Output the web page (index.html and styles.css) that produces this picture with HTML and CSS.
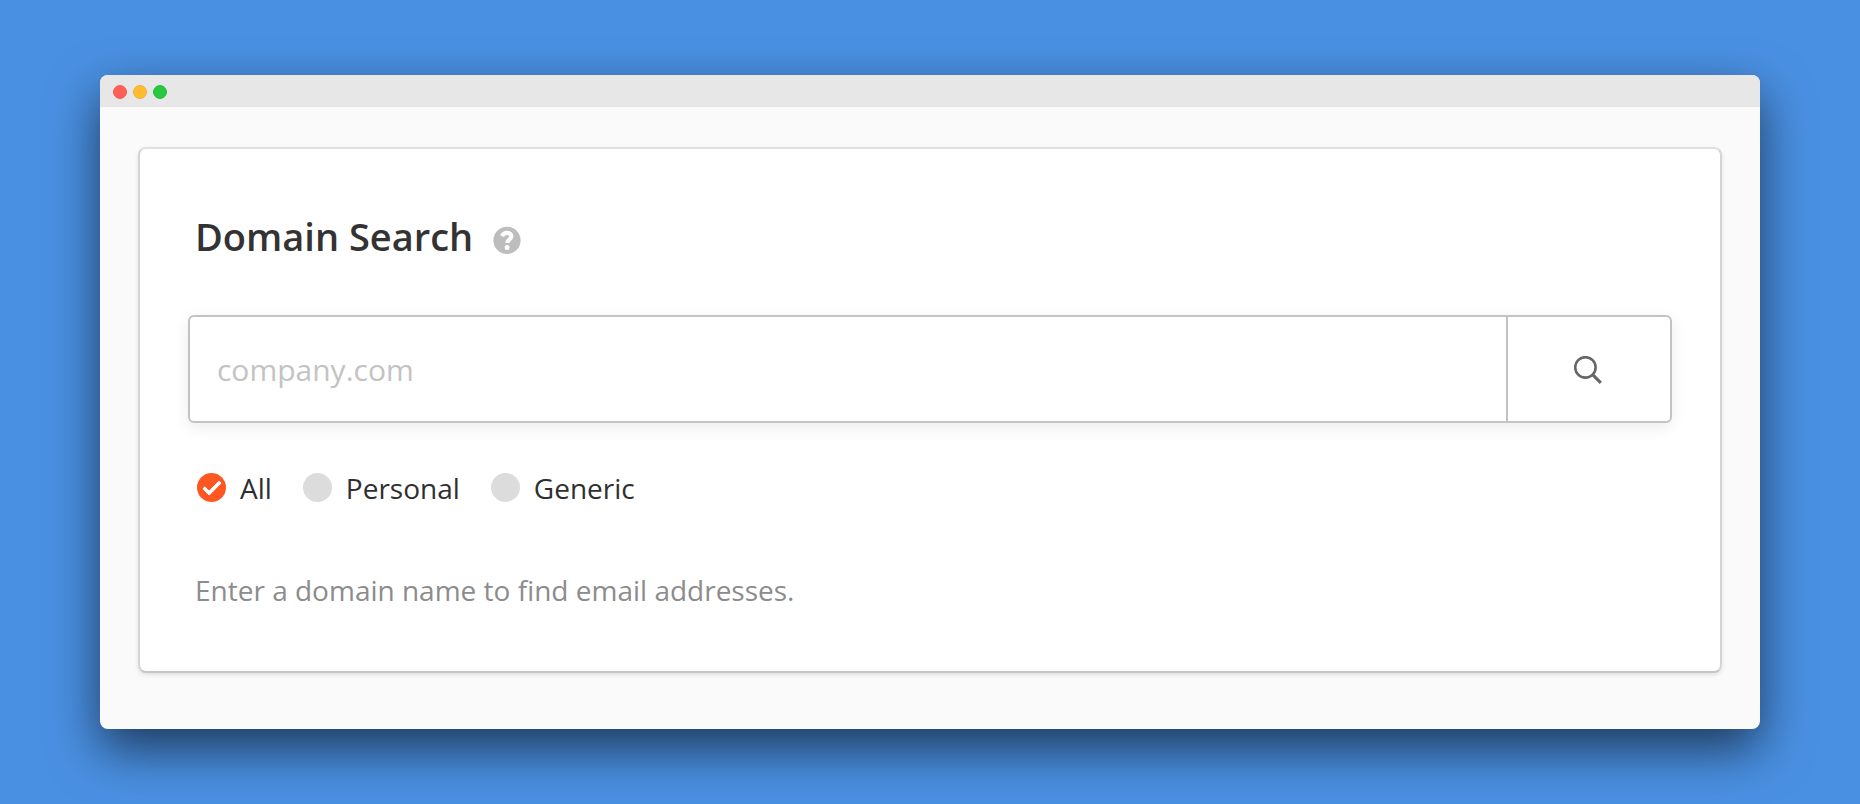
FILE: index.html
```html
<!DOCTYPE html>
<html lang="en">
<head>
  <meta charset="utf-8">
  <title>Domain Search</title>
  <link rel="stylesheet" href="styles.css">
</head>
<body>
  <div class="window">
    <div class="titlebar">
      <span class="dot dot-close"></span>
      <span class="dot dot-minimize"></span>
      <span class="dot dot-zoom"></span>
    </div>
    <main class="content">
      <form class="card">
        <header class="card-header">
          <h1 class="title">Domain Search</h1>
          <button class="help" type="button" aria-label="Help">
            <svg viewBox="0 0 28 28" width="28" height="28" aria-hidden="true">
              <circle cx="14" cy="14.4" r="13.6" fill="#bdbdbd"/>
              <path d="M9 10.2C10 7.9 11.7 6.8 14 6.8c2.6 0 4.3 1.4 4.3 3.5 0 3.3-4.1 3.2-4.1 6.6" fill="none" stroke="#fff" stroke-width="4.2"/>
              <circle cx="14.1" cy="21.4" r="2.5" fill="#fff"/>
            </svg>
          </button>
        </header>
        <div class="search">
          <input class="search-input" type="text" placeholder="company.com" aria-label="Domain name">
          <button class="search-button" type="submit" aria-label="Search">
            <svg viewBox="0 0 28 28" width="28" height="28" fill="none" stroke="#666" aria-hidden="true">
              <circle cx="11.4" cy="11.4" r="10.2" stroke-width="2.6"/>
              <path d="M18.6 18.6l8.2 8.2" stroke-width="3.2"/>
            </svg>
          </button>
        </div>
        <div class="filters">
          <label class="filter"><input class="radio" type="radio" name="type" checked>All</label>
          <label class="filter"><input class="radio" type="radio" name="type">Personal</label>
          <label class="filter"><input class="radio" type="radio" name="type">Generic</label>
        </div>
        <p class="hint">Enter a domain name to find email addresses.</p>
      </form>
    </main>
  </div>
</body>
</html>
```
FILE: styles.css
```css
*,
*::before {
  box-sizing: border-box;
}

body {
  margin: 0;
  padding: 75px 100px;
  background: #4a90e2;
  color: #2f2f2f;
  font-family: "Open Sans", "Noto Sans", sans-serif;
  font-size: 28px;
  line-height: 38px;
}

.window {
  overflow: hidden;
  border-radius: 8px;
  background: #fafafa;
  box-shadow: 0 20px 50px rgba(0, 0, 0, 0.6);
}

.titlebar {
  display: flex;
  align-items: center;
  gap: 6px;
  height: 32px;
  padding: 2px 13px 0;
  background: #e7e7e7;
}

.dot {
  width: 14px;
  height: 14px;
  border: 1px solid;
  border-radius: 50%;
}

.dot-close {
  background: #ff5f57;
  border-color: #f95a53;
}

.dot-minimize {
  background: #ffbd2e;
  border-color: #eeb03a;
}

.dot-zoom {
  background: #28c940;
  border-color: #27bf3d;
}

.content {
  padding: 40px 38px 56px;
}

.card {
  padding: 61px 48px 62px;
  border: 2px solid;
  border-color: #e0e0e0 #d5d5d5 #c6c6c6;
  border-radius: 8px;
  background: #fff;
  box-shadow: 0 2px 4px rgba(0, 0, 0, 0.1);
}

.card-header {
  display: flex;
  align-items: center;
  gap: 20px;
  padding-left: 7px;
}

.title {
  margin: 0;
  font-size: 38px;
  font-weight: 600;
  line-height: 52px;
  color: #333;
}

.help {
  display: flex;
  margin: 8px 0 0;
  padding: 0;
  border: 0;
  background: none;
}

.search {
  display: flex;
  height: 108px;
  margin-top: 53px;
  border: 2px solid #c3c3c3;
  border-radius: 6px;
  background: #fff;
  box-shadow: 0 4px 16px rgba(0, 0, 0, 0.08);
}

.search-input {
  flex: 1;
  min-width: 0;
  padding: 2px 27px 0;
  border: 0;
  border-radius: 6px;
  background: none;
  font: inherit;
  font-size: 30px;
  color: #333;
}

.search-input::placeholder {
  color: #c3c3c3;
}

.search-button {
  display: flex;
  align-items: center;
  justify-content: center;
  width: 164px;
  padding: 2px 2px 0 0;
  border: 0;
  border-left: 2px solid #c3c3c3;
  background: none;
}

.filters {
  display: flex;
  gap: 31px;
  margin-top: 46px;
  padding-left: 9px;
}

.filter {
  display: flex;
  align-items: center;
  gap: 14px;
}

.radio {
  appearance: none;
  display: grid;
  place-items: center;
  width: 29px;
  height: 29px;
  margin: 0 0 2px;
  border-radius: 50%;
  background: #dcdcdc;
}

.radio:checked {
  background: #ff5722;
}

.radio:checked::before {
  content: "";
  width: 18px;
  height: 10px;
  margin-bottom: 3px;
  border: solid #fff;
  border-width: 0 0 4px 4px;
  border-radius: 1px;
  transform: rotate(-45deg);
}

.hint {
  margin: 64px 0 0;
  padding-left: 7px;
  color: #8c8c8c;
}
```
